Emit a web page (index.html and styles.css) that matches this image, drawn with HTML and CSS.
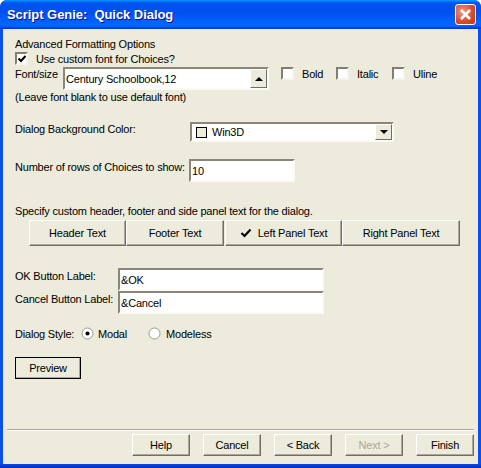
FILE: index.html
```html
<!DOCTYPE html>
<html lang="en">
<head>
<meta charset="utf-8">
<title>Script Genie: Quick Dialog</title>
<link rel="stylesheet" href="styles.css">
</head>
<body>
<div class="window">
  <header class="titlebar">
    <span class="title">Script Genie:&nbsp; Quick Dialog</span>
    <span class="close"><svg width="13" height="13" viewBox="0 0 13 13"><path d="M2 2 L11 11 M11 2 L2 11" stroke="#fff" stroke-width="2.6" fill="none"/></svg></span>
  </header>
  <main class="client">
    <div class="text heading">Advanced Formatting Options</div>
    <div class="row check-row">
      <span class="check"><svg width="10" height="10" viewBox="0 0 10 10"><path d="M1.5 4.5 L4 7 L8.5 2" stroke="#000" stroke-width="2" fill="none"/></svg></span>
      <span class="check-label">Use custom font for Choices?</span>
    </div>
    <div class="row font-row">
      <span class="label font-label">Font/size</span>
      <div class="field font-field">
        <span class="value">Century Schoolbook,12</span>
        <span class="spin"><i class="tri up"></i></span>
      </div>
      <span class="check opt-bold"></span><span class="opt-label w-bold">Bold</span>
      <span class="check"></span><span class="opt-label w-italic">Italic</span>
      <span class="check"></span><span class="opt-label">Uline</span>
    </div>
    <div class="text">(Leave font blank to use default font)</div>
    <div class="row bg-row">
      <span class="label bg-label">Dialog Background Color:</span>
      <div class="field combo">
        <span class="swatch"></span><span class="value">Win3D</span>
        <span class="spin"><i class="tri down"></i></span>
      </div>
    </div>
    <div class="row rows-row">
      <span class="label rows-label">Number of rows of Choices to show:</span>
      <div class="field rows-field"><span class="value">10</span></div>
    </div>
    <div class="text specify">Specify custom header, footer and side panel text for the dialog.</div>
    <div class="tabs">
      <button class="btn tab-header">Header Text</button>
      <button class="btn tab-footer">Footer Text</button>
      <button class="btn tab-left"><svg class="tick" width="12" height="10" viewBox="0 0 12 10"><path d="M1.5 5 L4.5 8 L10.5 1.5" stroke="#000" stroke-width="2.2" fill="none"/></svg>Left Panel Text</button>
      <button class="btn tab-right">Right Panel Text</button>
    </div>
    <div class="row label-row ok-row">
      <span class="label btn-label">OK Button Label:</span>
      <div class="field label-field"><span class="value">&amp;OK</span></div>
    </div>
    <div class="row label-row">
      <span class="label btn-label">Cancel Button Label:</span>
      <div class="field label-field"><span class="value">&amp;Cancel</span></div>
    </div>
    <div class="row style-row">
      <span class="style-label">Dialog Style:</span>
      <svg class="radio" width="13" height="13" viewBox="0 0 13 13"><circle cx="6.5" cy="6.5" r="5.5" fill="#fff" stroke="#9a988a"/><circle cx="6.5" cy="6.5" r="2" fill="#000"/></svg>
      <span class="radio-label modal">Modal</span>
      <svg class="radio" width="13" height="13" viewBox="0 0 13 13"><circle cx="6.5" cy="6.5" r="5.5" fill="#fff" stroke="#9a988a"/></svg>
      <span class="radio-label modeless">Modeless</span>
    </div>
    <button class="btn preview">Preview</button>
    <div class="separator"></div>
    <footer class="footer">
      <button class="btn foot">Help</button>
      <button class="btn foot">Cancel</button>
      <button class="btn foot">&lt; Back</button>
      <button class="btn foot disabled">Next &gt;</button>
      <button class="btn foot">Finish</button>
    </footer>
  </main>
</div>
</body>
</html>
```
FILE: styles.css
```css
* { box-sizing: border-box; }
html, body { margin: 0; padding: 0; background: #fff; }
body { font: 11px/14px "Liberation Sans", Arial, sans-serif; letter-spacing: -0.2px; color: #000; white-space: nowrap; }

.window {
  width: 481px; height: 468px;
  display: flex; flex-direction: column;
  border-radius: 7px 7px 0 0;
  overflow: hidden;
  background: linear-gradient(to bottom, #0a50ec 0, #0a50ec 99%, #0a2bc0 100%);
}
.titlebar {
  height: 29px; flex: none;
  display: flex; align-items: center; justify-content: space-between;
  padding: 0 5px 0 7px;
  background: linear-gradient(to bottom, #0997ff 0, #0053ee 10%, #0050ee 40%, #0066ff 85%, #005bff 92%, #003dd7 96%, #003dd7 100%);
}
.title { color: #fff; font: bold 13px "Liberation Sans", Arial, sans-serif; letter-spacing: -0.05px; text-shadow: 1px 1px 0 #0f1089; }
.close {
  width: 21px; height: 21px;
  display: flex; align-items: center; justify-content: center;
  border: 1px solid #fff; border-radius: 3px;
  background: radial-gradient(circle at 35% 35%, #e89a80, #d8492a 60%, #c0361a);
}
.client {
  flex: 1; min-height: 0;
  margin: 0 3px 4px;
  padding: 8px 4px 0 12px;
  background: #ecebdc;
  display: flex; flex-direction: column;
}
.text { height: 14px; }
.row { display: flex; align-items: flex-start; }
.heading { margin-bottom: 1px; }

.check {
  flex: none; width: 13px; height: 13px;
  background: #fff;
  border: 2px solid; border-color: #827f72 #f5f4ec #f5f4ec #827f72;
  display: flex; align-items: center; justify-content: center;
  overflow: hidden;
}
.check svg { flex: none; }
.check-row { height: 15px; }
.check-label { margin-left: 8px; }
.opt-label { margin-left: 8px; }
.opt-bold { margin-left: 12px; }
.w-bold { width: 34px; }
.w-italic { width: 35px; }

.label { flex: none; }
.field {
  flex: none; position: relative; background: #fff;
  display: flex; align-items: center;
  border: 2px solid; border-color: #8a877a #fbfaf5 #fbfaf5 #8a877a;
}
.value { padding-left: 1px; }

.font-row { height: 23px; }
.font-label { width: 48px; }
.font-field { width: 206px; height: 23px; }
.spin {
  position: absolute; right: 0; top: 0; bottom: 0; width: 17px;
  background: #ecebdc;
  border: 1px solid; border-color: #fff #716f64 #716f64 #fff;
  display: flex; align-items: center; justify-content: center;
}
.tri { width: 0; height: 0; border-left: 4px solid transparent; border-right: 4px solid transparent; }
.tri.up { border-bottom: 4px solid #000; }
.tri.down { border-top: 4px solid #000; }

.bg-row { margin-top: 18px; height: 37px; }
.bg-label { width: 175px; }
.combo { width: 204px; height: 20px; }
.swatch { width: 11px; height: 11px; margin: 0 4px 0 4px; border: 1px solid #000; background: #ecebdc; }
.rows-row { height: 45px; }
.rows-label { width: 174px; padding-top: 1px; }
.rows-field { width: 106px; height: 23px; }
.specify { margin-bottom: 2px; }

.btn {
  font: inherit; letter-spacing: inherit; color: #000; padding: 0; margin: 0;
  background: #ecebdc;
  border: 1px solid; border-color: #fff #716f64 #716f64 #fff;
  box-shadow: inset -1px -1px 0 #aca899;
  display: flex; align-items: center; justify-content: center;
}
.tabs { display: flex; height: 26px; margin-left: 14px; margin-bottom: 22px; }
.tab-header { width: 97px; }
.tab-footer { width: 98px; margin-right: 1px; }
.tab-left { width: 117px; }
.tab-right { width: 118px; }
.tick { margin-right: 6px; }

.label-row { height: 23px; }
.btn-label { width: 103px; padding-top: 1px; }
.label-field { width: 206px; height: 23px; }

.style-row { margin-top: 13px; height: 30px; }
.style-label { width: 66px; }
.radio { flex: none; }
.modal { width: 50px; margin-left: 4px; }
.modeless { margin-left: 5px; }

.preview {
  width: 66px; height: 22px;
  border: 1px solid #000;
  box-shadow: inset -1px -1px 0 #aca899;
}
.separator {
  margin: 50px 0 0 -8px; height: 2px;
  background: #aca899; border-bottom: 1px solid #fff;
}
.footer { display: flex; justify-content: flex-end; gap: 13px; margin-top: 3px; }
.foot { width: 58px; height: 22px; }
.disabled { color: #aca899; }
```
